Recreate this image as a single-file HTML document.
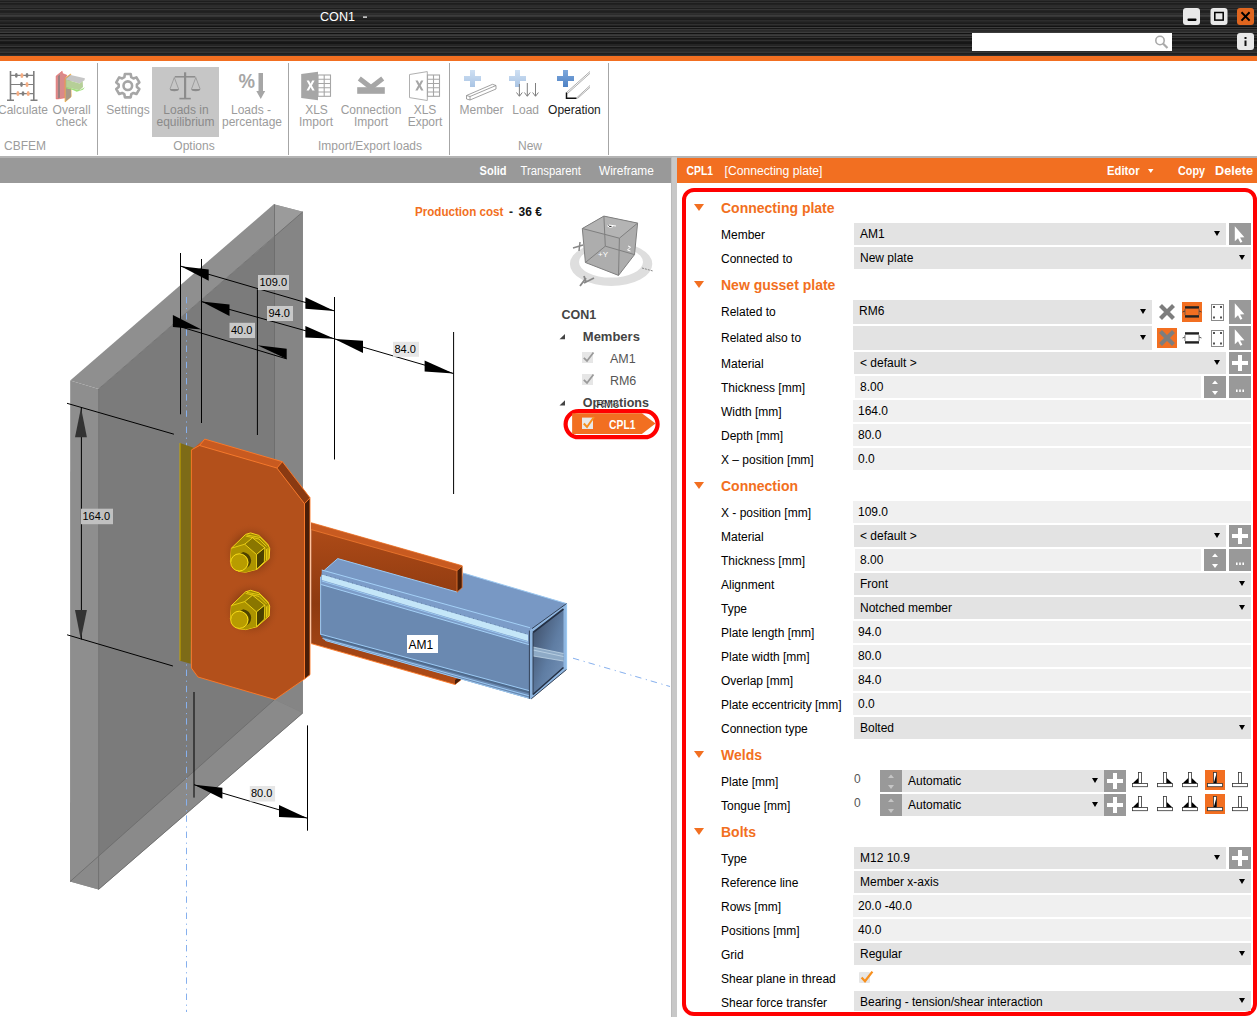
<!DOCTYPE html>
<html><head><meta charset="utf-8">
<style>
*{box-sizing:border-box;margin:0;padding:0}
html,body{width:1257px;height:1017px;overflow:hidden;background:#fff;font-family:"Liberation Sans",sans-serif;position:relative}
.a{position:absolute}
#title{left:0;top:0;width:1257px;height:56px;background:linear-gradient(180deg,rgb(44,44,44) 0px,rgb(44,44,44) 1px,rgb(30,30,30) 1px,rgb(30,30,30) 2px,rgb(48,48,48) 2px,rgb(48,48,48) 3px,rgb(30,30,30) 3px,rgb(30,30,30) 4px,rgb(34,34,34) 4px,rgb(34,34,34) 5px,rgb(44,44,44) 5px,rgb(44,44,44) 6px,rgb(44,44,44) 6px,rgb(44,44,44) 7px,rgb(48,48,48) 7px,rgb(48,48,48) 8px,rgb(30,30,30) 8px,rgb(30,30,30) 9px,rgb(54,54,54) 9px,rgb(54,54,54) 10px,rgb(36,36,36) 10px,rgb(36,36,36) 11px,rgb(32,32,32) 11px,rgb(32,32,32) 12px,rgb(34,34,34) 12px,rgb(34,34,34) 13px,rgb(48,48,48) 13px,rgb(48,48,48) 14px,rgb(44,44,44) 14px,rgb(44,44,44) 15px,rgb(60,60,60) 15px,rgb(60,60,60) 16px,rgb(54,54,54) 16px,rgb(54,54,54) 17px,rgb(34,34,34) 17px,rgb(34,34,34) 18px,rgb(32,32,32) 18px,rgb(32,32,32) 19px,rgb(28,28,28) 19px,rgb(28,28,28) 20px,rgb(44,44,44) 20px,rgb(44,44,44) 21px,rgb(38,38,38) 21px,rgb(38,38,38) 22px,rgb(32,32,32) 22px,rgb(32,32,32) 23px,rgb(28,28,28) 23px,rgb(28,28,28) 24px,rgb(48,48,48) 24px,rgb(48,48,48) 25px,rgb(34,34,34) 25px,rgb(34,34,34) 26px,rgb(18,18,18) 26px,rgb(18,18,18) 27px,rgb(60,60,60) 27px,rgb(60,60,60) 28px,rgb(22,22,22) 28px,rgb(22,22,22) 29px,rgb(54,54,54) 29px,rgb(54,54,54) 30px,rgb(42,42,42) 30px,rgb(42,42,42) 31px,rgb(44,44,44) 31px,rgb(44,44,44) 32px,rgb(60,60,60) 32px,rgb(60,60,60) 33px,rgb(18,18,18) 33px,rgb(18,18,18) 34px,rgb(54,54,54) 34px,rgb(54,54,54) 35px,rgb(60,60,60) 35px,rgb(60,60,60) 36px,rgb(32,32,32) 36px,rgb(32,32,32) 37px,rgb(54,54,54) 37px,rgb(54,54,54) 38px,rgb(22,22,22) 38px,rgb(22,22,22) 39px,rgb(30,30,30) 39px,rgb(30,30,30) 40px,rgb(48,48,48) 40px,rgb(48,48,48) 41px,rgb(28,28,28) 41px,rgb(28,28,28) 42px,rgb(22,22,22) 42px,rgb(22,22,22) 43px,rgb(22,22,22) 43px,rgb(22,22,22) 44px,rgb(36,36,36) 44px,rgb(36,36,36) 45px,rgb(36,36,36) 45px,rgb(36,36,36) 46px,rgb(54,54,54) 46px,rgb(54,54,54) 47px,rgb(22,22,22) 47px,rgb(22,22,22) 48px,rgb(34,34,34) 48px,rgb(34,34,34) 49px,rgb(44,44,44) 49px,rgb(44,44,44) 50px,rgb(40,40,40) 50px,rgb(40,40,40) 51px,rgb(44,44,44) 51px,rgb(44,44,44) 52px,rgb(54,54,54) 52px,rgb(54,54,54) 53px,rgb(30,30,30) 53px,rgb(30,30,30) 54px,rgb(36,36,36) 54px,rgb(36,36,36) 55px,rgb(48,48,48) 55px,rgb(48,48,48) 56px)}
#obar{left:0;top:56px;width:1257px;height:5px;background:#f26f21}
#ribbon{left:0;top:61px;width:1257px;height:96px;background:#fff}
.wbtn{width:17px;height:17px;border-radius:3px;background:#e8e8e8}
#vtb{left:0;top:157px;width:671px;height:26px;background:#999;border-top:1px solid #b4b4b4}
#split{left:671px;top:157px;width:6px;height:860px;background:#c8c8c8;border-left:1px solid #bbb}
#rhead{left:677px;top:157px;width:580px;height:26px;background:#f26f21;border-top:1px solid #b4b4b4}
#rpanel{left:682px;top:188px;width:575px;height:828px;border:4px solid #ff0000;border-radius:12px}
.lbl{position:absolute;left:721px;font-size:12px;color:#000}
.hdr{position:absolute;left:721px;font-size:14px;font-weight:bold;color:#f26f21}
.tri{position:absolute;left:694px;width:0;height:0;border-left:5px solid transparent;border-right:5px solid transparent;border-top:7px solid #f26f21}
.fld{position:absolute;height:22px;font-size:12px;color:#000;padding-left:6px;line-height:22px;white-space:nowrap;overflow:hidden}
.dd{background:#e3e3e3}
.tx{background:#f0f0f0}
.arr{position:absolute;width:0;height:0;border-left:3.5px solid transparent;border-right:3.5px solid transparent;border-top:5px solid #000}
.gbtn{position:absolute;background:#999;width:22px;height:22px}
</style></head><body>
<div id="title" class="a"></div>
<svg class="a" style="left:300px;top:0" width="100" height="40" viewBox="300 0 100 40" font-family="Liberation Sans"><text x="320" y="21" font-size="13.5" fill="#fff" textLength="35" lengthAdjust="spacingAndGlyphs">CON1</text><rect x="363" y="16.5" width="4" height="1.2" fill="#fff"/></svg>
<svg class="a" style="left:960px;top:0" width="297" height="56" viewBox="960 0 297 56">
<rect x="1183" y="8" width="17" height="17" rx="3" fill="#e8e8e8"/>
<rect x="1187.5" y="18.5" width="9" height="2.4" rx="0.8" fill="#000"/>
<rect x="1210.5" y="8" width="17" height="17" rx="3" fill="#e8e8e8"/>
<rect x="1214.8" y="12.5" width="8.4" height="7.6" fill="none" stroke="#000" stroke-width="1.5"/>
<rect x="1237" y="8" width="17" height="17" rx="3" fill="#e0661f"/>
<path d="M1241.5 12.3 L1249.6 20.6 M1249.6 12.3 L1241.5 20.6" stroke="#000" stroke-width="2"/>
<rect x="972" y="33" width="200" height="18" fill="#fff"/>
<circle cx="1160" cy="40.5" r="4.2" fill="none" stroke="#aaa" stroke-width="1.6"/>
<path d="M1163 43.5 L1167.5 48" stroke="#aaa" stroke-width="2.2"/>
<rect x="1237" y="33" width="17" height="17" rx="3" fill="#e8e8e8"/>
<rect x="1244.5" y="37" width="2" height="2" fill="#111"/>
<rect x="1244.5" y="40.5" width="2" height="5.5" fill="#111"/>
</svg>
<div id="obar" class="a"></div>
<div id="ribbon" class="a"></div>
<svg class="a" style="left:0;top:61px" width="1257" height="96" viewBox="0 61 1257 96" font-family="Liberation Sans" font-size="12">
<rect x="152" y="67" width="67" height="70" fill="#c6c6c6"/>
<g stroke="#a6a6a6" stroke-width="1"><path d="M97.5 63 V155 M288.5 63 V155 M449.5 63 V155 M608.5 63 V155"/></g>
<rect x="0" y="156" width="1257" height="1" fill="#b4b4b4"/>
<!-- abacus -->
<g stroke="#7f7f7f" stroke-width="1.6" fill="none">
<path d="M10.5 71 V100 M33.8 71 V100 M7 100.2 H14 M30.5 100.2 H37.5"/>
<path d="M10.5 75.4 H33.8 M10.5 84.5 H33.8 M10.5 93.6 H33.8" stroke-width="1.1"/>
</g>
<g fill="#7f7f7f"><ellipse cx="16.3" cy="75.4" rx="1.4" ry="2.4"/><ellipse cx="27" cy="75.4" rx="1.4" ry="2.4"/><ellipse cx="21.5" cy="84.5" rx="1.4" ry="2.4"/><ellipse cx="23" cy="93.6" rx="1.4" ry="2.4"/></g>
<g fill="#f6ad82"><ellipse cx="21.9" cy="75.4" rx="1.5" ry="2.5"/><ellipse cx="27" cy="84.5" rx="1.5" ry="2.5"/><ellipse cx="17.9" cy="93.6" rx="1.5" ry="2.5"/><ellipse cx="28.2" cy="93.6" rx="1.5" ry="2.5"/></g>
<!-- overall check -->
<polygon points="56.1,76.1 62.1,71.2 62.6,73.6 67,75.3 65.1,78.3 65.1,97.8 58,98.9 56.1,98.9" fill="#d98a8a" stroke="#e86a6a" stroke-width="0.6"/>
<polygon points="58,76 60,74.6 60,97.8 58,98.5" fill="#9c8080"/>
<polygon points="65.1,78.3 70.7,74 71.1,96.7 65.1,101.9" fill="#a89888" stroke="#f5b040" stroke-width="0.8"/>
<polygon points="65.8,79.1 70.7,75 84.9,78.3 84.5,80.2 79.7,83.6 66.2,79.8" fill="#c6c6c6"/>
<polygon points="66.2,79.8 79.7,83.6 82.7,81.3 83,86.9 79.7,90.3 66.2,87.3" fill="#b6cf98"/>
<polygon points="66.2,87.3 79.7,90.3 84.9,87.3 83,89.8 76.7,91.8 72.9,89.9 66.2,88.6" fill="#9ee07a"/>
<polygon points="66.2,88.6 71,89.5 71.1,96.7 66.2,100.8" fill="#a89888"/>
<!-- gear -->
<path d="M124.35 77.17 L124.90 74.06 L130.70 74.06 L131.25 77.17 L133.46 78.45 L136.43 77.36 L139.34 82.39 L136.91 84.42 L136.91 86.98 L139.34 89.01 L136.43 94.04 L133.46 92.95 L131.25 94.23 L130.70 97.34 L124.90 97.34 L124.35 94.23 L122.14 92.95 L119.17 94.04 L116.26 89.01 L118.69 86.98 L118.69 84.42 L116.26 82.39 L119.17 77.36 L122.14 78.45Z" fill="none" stroke="#a6a6a6" stroke-width="2.6" stroke-linejoin="round"/>
<circle cx="127.8" cy="85.7" r="4.3" fill="none" stroke="#a6a6a6" stroke-width="2.6"/>
<!-- scale -->
<g fill="#8c8c8c" stroke="#8c8c8c">
<path d="M185.1 72.3 V98.5" stroke-width="2.2"/>
<path d="M179.4 98.6 H190.8" stroke-width="1.6"/>
<path d="M174.8 76.8 H195.3" stroke-width="1.5"/>
<path d="M174.3 77.5 L170 89 M174.3 77.5 L178.6 89 M195.8 77.5 L191.5 89 M195.8 77.5 L200.1 89" stroke-width="0.7" fill="none"/>
<path d="M169.8 89 H178.9 A4.55 2.2 0 0 1 169.8 89Z" stroke="none"/>
<path d="M191.2 89 H200.3 A4.55 2.2 0 0 1 191.2 89Z" stroke="none"/>
</g>
<!-- % down -->
<text x="238.5" y="88.2" font-size="19.5" font-weight="bold" fill="#a6a6a6" textLength="16.5" lengthAdjust="spacingAndGlyphs">%</text>
<path d="M258.5 73 H263 V91 H265.2 L260.75 99 L256.3 91 H258.5Z" fill="#a6a6a6"/>
<!-- XLS import -->
<path d="M301.2 74 L318 71.8 V100.3 L301.2 98Z" fill="#a6a6a6"/>
<path d="M306.6 80.6 h2.4 l1.6 3.2 l1.6 -3.2 h2.4 l-2.7 5 l2.8 5 h-2.4 l-1.7 -3.3 l-1.7 3.3 h-2.4 l2.8 -5 z" fill="#fff"/>
<g stroke="#a6a6a6" fill="none" stroke-width="1.1"><rect x="318" y="75" width="12.5" height="21.3"/><path d="M318 79.2 H330.5 M318 83.5 H330.5 M318 87.8 H330.5 M318 92 H330.5 M324.2 75 V96.3"/></g>
<!-- connection import -->
<path d="M359.3 78.6 L371 87.5 L382.7 78.6" stroke="#a6a6a6" stroke-width="5" fill="none"/><rect x="357.2" y="87.2" width="27.6" height="6.6" fill="#a6a6a6"/>
<!-- XLS export -->
<path d="M409.5 74.5 L427.3 71.6 V100.5 L409.5 97.6Z" fill="#fff" stroke="#b0b0b0" stroke-width="1"/>
<path d="M415.4 80.6 h2.4 l1.6 3.2 l1.6 -3.2 h2.4 l-2.7 5 l2.8 5 h-2.4 l-1.7 -3.3 l-1.7 3.3 h-2.4 l2.8 -5 z" fill="#a6a6a6"/>
<g stroke="#a6a6a6" fill="none" stroke-width="1.1"><rect x="427.5" y="75" width="12" height="21.3"/><path d="M427.5 79.2 H439.5 M427.5 83.5 H439.5 M427.5 87.8 H439.5 M427.5 92 H439.5 M433.5 75 V96.3"/></g>
<!-- member -->
<defs><linearGradient id="pl" x1="0" y1="0" x2="0" y2="1"><stop offset="0" stop-color="#cfe0f3"/><stop offset="1" stop-color="#a9c4e4"/></linearGradient>
<linearGradient id="pl2" x1="0" y1="0" x2="0" y2="1"><stop offset="0" stop-color="#7ea8dc"/><stop offset="1" stop-color="#4f82c4"/></linearGradient></defs>
<path d="M470 70 h5 v6 h6 v5 h-6 v6 h-5 v-6 h-6 v-5 h6z" fill="url(#pl)"/>
<g stroke="#8a8a8a" fill="#fff" stroke-width="0.8"><path d="M466.5 95.5 L492.5 84.3 L496 85.5 L496 89 L470 100 L466.5 99 Z"/><path d="M466.5 95.5 L470 96.5 L496 85.5 M470 96.5 V100" fill="none"/></g>
<!-- load -->
<path d="M515 70 h5 v6 h6 v5 h-6 v6 h-5 v-6 h-6 v-5 h6z" fill="url(#pl)"/>
<g stroke="#7f7f7f" stroke-width="1" fill="none"><path d="M519.4 84 V96 M516.5 92.5 L519.4 96.3 L522.3 92.5 M527.3 83 V96 M524.4 92.5 L527.3 96.3 L530.2 92.5 M535.5 83 V96 M532.6 92.5 L535.5 96.3 L538.4 92.5"/></g>
<!-- operation -->
<path d="M563 70 h5 v6 h6 v5 h-6 v6 h-5 v-6 h-6 v-5 h6z" fill="url(#pl2)"/>
<g stroke="#8a8a8a" stroke-width="0.7" fill="none"><path d="M566.5 92.5 L590 71.5 M567.5 93.5 L590 73.3 M576.5 98 L590 85.5 M577.5 98.5 L590 87.3"/></g>
<path d="M566.5 92.5 V98.3 H576.5" stroke="#111" stroke-width="1.5" fill="none"/>
<!-- labels -->
<g fill="#9c9c9c" text-anchor="middle">
<text x="23" y="114">Calculate</text>
<text x="71.6" y="114">Overall</text><text x="71.5" y="126">check</text>
<text x="25" y="150">CBFEM</text>
<text x="128" y="114">Settings</text>
<text x="186" y="114" fill="#8a8a8a">Loads in</text><text x="185.5" y="126" fill="#8a8a8a">equilibrium</text>
<text x="251" y="114">Loads -</text><text x="252" y="126">percentage</text>
<text x="194" y="150">Options</text>
<text x="316.5" y="114">XLS</text><text x="316" y="126">Import</text>
<text x="371" y="114">Connection</text><text x="371" y="126">Import</text>
<text x="425" y="114">XLS</text><text x="425" y="126">Export</text>
<text x="370" y="150">Import/Export loads</text>
<text x="481.5" y="114">Member</text>
<text x="525.7" y="114">Load</text>
<text x="574.4" y="114" fill="#1a1a1a">Operation</text>
<text x="530" y="150">New</text>
</g>
</svg>

<div id="vtb" class="a"></div>
<svg class="a" style="left:0;top:157px" width="671" height="860" viewBox="0 157 671 860" font-family="Liberation Sans">
<defs>
<linearGradient id="tubeInner" x1="0" y1="0" x2="1" y2="1"><stop offset="0" stop-color="#3a4860"/><stop offset="0.55" stop-color="#5f7da3"/><stop offset="1" stop-color="#7896bc"/></linearGradient>
<radialGradient id="bshadow" cx="0.5" cy="0.5" r="0.5"><stop offset="0.45" stop-color="#6e300c" stop-opacity="0.75"/><stop offset="1" stop-color="#b5501c" stop-opacity="0"/></radialGradient>
<linearGradient id="tongueG" x1="0" y1="0" x2="0" y2="1"><stop offset="0" stop-color="#b04c18"/><stop offset="0.5" stop-color="#8e3a10"/><stop offset="1" stop-color="#b04c18"/></linearGradient>
</defs>
<!-- viewport toolbar text -->
<g font-size="12" fill="#fff">
<text x="479.6" y="175" font-weight="bold" textLength="27" lengthAdjust="spacingAndGlyphs">Solid</text>
<text x="520.5" y="175" textLength="60.5" lengthAdjust="spacingAndGlyphs">Transparent</text>
<text x="599" y="175" textLength="54.8" lengthAdjust="spacingAndGlyphs">Wireframe</text>
</g>
<!-- column plate -->
<polygon points="70.2,380.6 98.6,389 98.6,889.4 70,881.6" fill="#8e8e8e"/>
<polygon points="98.6,389 302.8,211.8 302.8,713 98.6,889.4" fill="#7b7b7b"/>
<polygon points="274.5,235.7 302.8,211.8 302.8,713 274.5,699.6" fill="#858585"/>
<polygon points="70,881.6 274.5,699.6 302.8,713 98.6,889.4" fill="#8a8a8a"/>
<polygon points="70.2,380.6 273.8,204.3 302.8,211.8 98.6,389" fill="#8f8f8f"/>
<polygon points="273.8,204.3 302.8,211.8 274.6,235.7" fill="#9b9b9b"/>
<g stroke="#6a6a6a" stroke-width="0.8" fill="none">
<path d="M274.5 204.3 V699.6 M70 881.6 L274.5 699.6 M98.6 389 L302.8 211.8 M98.6 389 V889.4 M98.6 889.4 L302.8 713"/>
</g>
<!-- dash-dot axis vertical -->
<path d="M186.5 297 V1012" stroke="#86b0ee" stroke-width="1" stroke-dasharray="6.4,4.6,1.2,4" fill="none"/>
<!-- weld strip -->
<polygon points="180,443 193.6,447.7 190.6,663.7 180,660.7" fill="#7d6b17"/>
<path d="M180 443 V660.7" stroke="#c9a800" stroke-width="1"/>
<!-- tongue plate -->
<polygon points="311.2,522.7 462.2,565.7 460.7,680 455,684.5 311.2,643.6" fill="url(#tongueG)"/>
<polygon points="311.2,522.7 462.2,565.7 457,570.7 311.2,529.6" fill="#c85a20"/>
<path d="M311.2 522.7 L462.2 565.7 M311.2 529.6 L457 570.7" stroke="#f07a30" stroke-width="0.8" fill="none"/>
<path d="M311.2 643.6 L455 684.5 L460.7 680" stroke="#ff7a28" stroke-width="0.9" fill="none"/><polygon points="455,684.5 460.7,680 460.7,676 455,680" fill="#4a1e08"/>
<!-- orange gusset plate: top face & side faces -->
<polygon points="191.4,449.9 204.7,439.1 282.4,461.7 310,497.8 310,674.7 304.5,679 304.5,503.7 276.9,468 199.5,445.5" fill="#c85a20"/>
<polygon points="276.9,468 282.4,461.7 310,497.8 304.5,503.7" fill="#8a3a12"/>
<polygon points="304.5,503.7 310,497.8 310,674.7 304.5,679" fill="#4a1e08"/>
<polygon points="191.4,449.9 199.5,445.5 276.9,468 304.5,503.7 304.5,679 275,699.5 198,677 191.4,668" fill="#b3501b"/>
<path d="M191.4 449.9 L199.5 445.5 L276.9 468 L304.5 503.7 L304.5 679 L275 699.5 L198 677 L191.4 668 Z M204.7 439.1 L282.4 461.7 L310 497.8 V674.7 L304.5 679 M199.5 445.5 L204.7 439.1 M276.9 468 L282.4 461.7 M304.5 503.7 L310 497.8" stroke="#ff7a28" stroke-width="0.9" fill="none"/>
<!-- bolts -->
<g id="bolt1">
<ellipse cx="251" cy="552" rx="29" ry="29" fill="url(#bshadow)"/>
<polygon points="231.4,548.2 245.6,534.4 250.6,532.9 258.9,535.4 267.8,544.2 269.7,548.6 269.2,558.5 257,569.3 245.6,572.2 238.3,571.3 230.4,561.4" fill="#a08800" stroke="#ffe21a" stroke-width="0.9"/>
<polygon points="231.4,548.2 244.7,544.2 256.5,554.5 256.5,569.3 245.6,572.2 238.3,571.3 230.4,561.4" fill="#ac9300"/>
<polygon points="244.7,544.2 252.5,537.8 264.8,547.7 256.5,554.5" fill="#8a7600" stroke="#ffe21a" stroke-width="0.8"/>
<polygon points="256.5,554.5 264.8,547.7 264.3,561.9 256.5,569.3" fill="#4a4000" stroke="#ffe21a" stroke-width="0.8"/>
<path d="M231.4 548.2 L244.7 544.2 M245.6 536 L259 539 L266.5 546.5 M247 535 L260.5 537.5 L268 545.5 M266.5 549 V560 M268 548 V559" stroke="#ffe21a" stroke-width="0.7" fill="none"/>
<path d="M240 553.8 a8.6 8.6 0 0 1 8.6 8.6 a8.6 8.6 0 0 1 -2 5.5 L249.2 566 a9 9 0 0 0 2 -5.6 a9 9 0 0 0 -8 -8.5 Z" fill="#4e4200"/>
<circle cx="239.3" cy="562.4" r="8.6" fill="#b89c00" stroke="#ffe21a" stroke-width="0.9"/>
</g>
<use href="#bolt1" transform="translate(0 57.4)"/>
<!-- tube -->
<polygon points="337.7,558.6 457,592 463.3,573.1 566.5,603.6 566.5,669.5 531.3,698.8 325.3,640.5 320.6,634.6 320.6,576.8 324.2,570.4" fill="#7898c4"/>
<polygon points="321.8,569.8 530,627.5 529.4,644.8 321.2,584.5" fill="#7c9cc8"/>
<path d="M321.8 570 L530 627.7" stroke="#a4d0f6" stroke-width="1" fill="none"/>
<polygon points="321.8,574.5 528,634.8 528,641 321.8,580" fill="#c4e6f8"/>
<path d="M321.8 574 L528 634.3" stroke="#5a7898" stroke-width="0.8" stroke-dasharray="1,3.5" fill="none"/>
<path d="M321.8 581 L528 642" stroke="#9cc8f0" stroke-width="1" fill="none"/>
<polygon points="321.2,584.5 529.4,644.8 529.4,698.8 325.3,640.5 320.6,634.6" fill="#6a89b1"/>
<path d="M321.2 584.5 L529.4 644.8" stroke="#a4d0f6" stroke-width="1" fill="none"/>
<polygon points="320.6,634.2 529.4,690.7 529.4,693.5 321.5,637" fill="#4f6a8c"/>
<path d="M320.6 634.2 L529.4 690.7 M322.5 638.5 L530 696" stroke="#9ccaf4" stroke-width="1" fill="none"/>
<path d="M337.7 558.6 L457 592 M463.3 573.1 L566.5 603.6 M320.6 576.8 V634.6 M324.2 570.4 L337.7 558.6 M325.3 640.5 L531.3 698.8" stroke="#9cc8f0" stroke-width="1" fill="none"/>
<!-- tube end -->
<polygon points="532,628.6 566.5,603.6 566.5,669.5 531.3,698.8 529.4,698.8 529.4,630.5" fill="#8fb6e0"/>
<polygon points="533,632.5 563.5,609 563.5,667.5 533,694.5" fill="url(#tubeInner)"/>
<polygon points="533,647 563.5,653.5 563.5,661 533,656" fill="#8eaac6"/>
<path d="M533 647 L563.5 653.5 M533 650 L563.5 656.5 M533 656 L563.5 661" stroke="#c8dcec" stroke-width="0.7" fill="none"/>
<path d="M533 694.5 L563.5 667.5 M533 632.5 L563.5 609" stroke="#243044" stroke-width="1.6" fill="none"/>
<path d="M532 628.6 L566.5 603.6 V669.5 L531.3 698.8 M529.4 630.5 V698.8 M533 632.5 V694.5" stroke="#2a3548" stroke-width="0.9" fill="none"/>
<path d="M566.5 603.6 V669.5" stroke="#9cc8f0" stroke-width="1.2" fill="none"/>
<!-- tongue end above tube -->
<polygon points="457,570.7 462.2,566 462.2,587.6 457,592.2" fill="#4a1e08" stroke="#f07a30" stroke-width="0.8"/>
<!-- axis dash-dot -->
<path d="M573 658.2 L670 686.5" stroke="#86b0ee" stroke-width="1" stroke-dasharray="6.4,4.6,1.2,4" fill="none"/>
<!-- AM1 label -->
<rect x="407" y="635" width="31" height="18" fill="#fff"/>
<text x="408.5" y="648.5" font-size="12" fill="#000">AM1</text>
<!-- dimensions -->
<g stroke="#000" stroke-width="1" fill="none">
<path d="M180.5 253 V414.3 M201.5 259 V423 M257.4 289.4 V435 M334.5 297 V459.5 M453.6 332 V494"/>
<path d="M180.8 266.2 L334.4 310.9 M201.5 301.6 L334.4 338.8 L453.6 373.5 M172.9 324.5 L286.7 358.9"/>
<path d="M67 403.3 L173.9 434.2 M67.1 634.8 L172.9 666 M81.4 407.7 V639.5"/>
<path d="M194 692 V797.6 M307.5 725.4 V830.7 M194 784.7 L307.5 818.2"/>
</g>
<g fill="#000">
<polygon points="180.8,266.2 208.7,269.4 208.7,280.8"/>
<polygon points="334.4,310.9 305.4,297.3 305.4,308.7"/>
<polygon points="201.5,301.6 229.5,304.5 229.5,316"/>
<polygon points="334.4,338.8 305.4,326 305.4,337.4"/>
<polygon points="172.9,315 172.9,327 201.5,329.5"/>
<polygon points="257.4,345.3 286.7,348.8 286.7,358.9"/>
<polygon points="334.6,339 363,340.8 363,353"/>
<polygon points="453.6,373.5 424.6,360.4 424.6,371.6"/>
<polygon points="194,784.7 222.4,787.8 222.4,798.7"/>
<polygon points="307.5,818.2 279,805 279,817"/>
</g>
<g fill="#333">
<polygon points="81,407.7 75,437.2 86.9,437.2"/>
<polygon points="80.8,639.5 75,610 86.9,610"/>
</g>
<g font-size="11" fill="#000">
<rect x="258" y="275" width="31" height="15" fill="#c8c8c8"/><text x="259.5" y="286">109.0</text>
<rect x="267" y="306" width="26" height="15" fill="#c8c8c8"/><text x="268.5" y="317">94.0</text>
<rect x="229.5" y="322.8" width="25.5" height="15.2" fill="#c8c8c8"/><text x="231" y="334">40.0</text>
<rect x="393" y="341.8" width="26" height="15" fill="#e6e6e6"/><text x="394.5" y="353">84.0</text>
<rect x="81" y="508.7" width="32" height="15.5" fill="#c0c0c0"/><text x="82.5" y="520">164.0</text>
<rect x="249.8" y="786" width="25.3" height="15.5" fill="#e6e6e6"/><text x="251" y="797">80.0</text>
</g>
<!-- production cost -->
<text x="415" y="216.4" font-size="12" font-weight="bold" fill="#f26f21" textLength="88.4" lengthAdjust="spacingAndGlyphs">Production cost</text>
<text x="509" y="216.4" font-size="12" font-weight="bold" fill="#222">-</text>
<text x="518.5" y="216.4" font-size="12" font-weight="bold" fill="#111">36 €</text>
<!-- view cube -->
<path fill-rule="evenodd" d="M569.9 264 a41.2 22 0 1 0 82.4 0 a41.2 22 0 1 0 -82.4 0 Z M579 262 a32 15.6 0 1 0 64 0 a32 15.6 0 1 0 -64 0 Z" fill="#dedede"/>
<polygon points="582.3,228.5 603.9,216.1 637.6,223.1 634.5,254.6 618.5,275.4 585.4,262.5" fill="#adadad"/>
<polygon points="582.3,228.5 603.9,216.1 637.6,223.1 619.4,238.2" fill="#b4b4b4"/>
<g stroke="#7f7f7f" stroke-width="1" fill="none">
<path d="M582.3 228.5 L603.9 216.1 L637.6 223.1 L619.4 238.2 Z M585.4 262.5 L605.3 246.2 L634.5 254.6 L618.5 275.4 Z M582.3 228.5 L585.4 262.5 M603.9 216.1 L605.3 246.2 M637.6 223.1 L634.5 254.6 M619.4 238.2 L618.5 275.4"/>
</g>
<g fill="#fff" font-size="8"><text x="598" y="256.5">+Y</text></g><path d="M607 225.5 L610 227.5 L613 226.5 M609 225 L616 226" stroke="#fff" stroke-width="1"/><path d="M628 246 L630.5 247 L627.5 250 L630.5 251" stroke="#fff" stroke-width="1" fill="none"/>
<path d="M573 248 L583 245 M580 242 L579 251" stroke="#888" stroke-width="1.5"/>
<path d="M642 268 L653 271" stroke="#888" stroke-width="1" stroke-dasharray="2,1"/>
<path d="M580 286 L586 278 M584 283 L594 278 M584 276 L586 282" stroke="#888" stroke-width="1.8"/>
<!-- tree -->
<text x="561.4" y="318.8" font-size="12.5" font-weight="bold" fill="#444">CON1</text>
<polygon points="559.5,339.2 565,339.2 565,334" fill="#444"/>
<text x="582.8" y="340.6" font-size="13" font-weight="bold" fill="#444">Members</text>
<rect x="582" y="352" width="11" height="11" fill="#e6e6e6"/><path d="M583.8 357.8 L587 361 L593.5 352.5" stroke="#9a9a9a" stroke-width="1.8" fill="none"/>
<text x="609.9" y="362.7" font-size="12.5" fill="#555">AM1</text>
<rect x="582" y="374" width="11" height="11" fill="#e6e6e6"/><path d="M583.8 379.8 L587 383 L593.5 374.5" stroke="#9a9a9a" stroke-width="1.8" fill="none"/>
<text x="609.9" y="384.8" font-size="12.5" fill="#555">RM6</text>
<polygon points="559.5,405.4 565,405.4 565,400.2" fill="#444"/>
<text x="582.8" y="406.9" font-size="13" font-weight="bold" fill="#444" textLength="66.2" lengthAdjust="spacingAndGlyphs">Operations</text>
<text x="596.3" y="408.3" font-size="11" fill="#1a1a1a" stroke="#fff" stroke-width="0.6" paint-order="stroke" textLength="22.8" lengthAdjust="spacingAndGlyphs">RM6</text>
<rect x="565.6" y="411.2" width="92" height="26" rx="13" ry="13" fill="none" stroke="#ff0000" stroke-width="4.2"/>
<polygon points="572.1,413.3 641.9,413.3 655.5,423.6 641.9,434 572.1,434" fill="#f26f21"/>
<rect x="582" y="417.6" width="11" height="11.4" fill="#e8e8e8"/><path d="M583.8 423.5 L587 427 L594 417" stroke="#f7901e" stroke-width="2" fill="none"/>
<text x="609.1" y="429" font-size="12.5" font-weight="bold" fill="#fff" textLength="26.4" lengthAdjust="spacingAndGlyphs">CPL1</text>
</svg>

<div id="split" class="a"></div>
<div id="rhead" class="a"></div>
<svg class="a" style="left:677px;top:157px" width="580" height="26" viewBox="677 157 580 26" font-family="Liberation Sans" font-size="12" fill="#fff">
<text x="686.5" y="175" font-weight="bold" textLength="26.5" lengthAdjust="spacingAndGlyphs">CPL1</text>
<text x="724.5" y="175" textLength="98" lengthAdjust="spacingAndGlyphs">[Connecting plate]</text>
<text x="1107" y="175" font-weight="bold" textLength="32.6" lengthAdjust="spacingAndGlyphs">Editor</text>
<path d="M1148 169 H1153.5 L1150.75 173 Z"/>
<text x="1178" y="175" font-weight="bold" textLength="27" lengthAdjust="spacingAndGlyphs">Copy</text>
<text x="1215" y="175" font-weight="bold" textLength="38" lengthAdjust="spacingAndGlyphs">Delete</text>
</svg>
<div id="rpanel" class="a"></div>
<div class="tri" style="top:204px"></div>
<div class="hdr" style="top:201px;line-height:14px">Connecting plate</div>
<div class="lbl" style="top:224px;line-height:22px">Member</div>
<div class="fld dd" style="top:223px;left:854px;width:372px;height:22px;line-height:22px">AM1</div>
<div class="arr" style="left:1213.5px;top:231px"></div>
<div class="gbtn" style="top:223px;left:1229px;height:22px">
<svg width="22" height="24" viewBox="0 0 22 24"><path d="M5.8 3.2 L5.8 18.3 L9 15.3 L11.4 19.8 L13.4 18.8 L11.1 14.4 L15.4 14.2 Z" fill="#fff"/></svg>
</div>
<div class="lbl" style="top:248px;line-height:22px">Connected to</div>
<div class="fld dd" style="top:247px;left:854px;width:397px;height:22px;line-height:22px">New plate</div>
<div class="arr" style="left:1238.5px;top:255px"></div>
<div class="tri" style="top:281px"></div>
<div class="hdr" style="top:278px;line-height:14px">New gusset plate</div>
<div class="lbl" style="top:300px;line-height:24px">Related to</div>
<div class="fld dd" style="top:300px;left:853px;width:299px;height:24px;line-height:22px">RM6</div>
<div class="arr" style="left:1139.5px;top:309px"></div>
<div class="a" style="left:1157px;top:302px;width:20px;height:20px;"><svg width="20" height="20" viewBox="0 0 20 20"><path d="M3.5 3.5 L16.5 16.5 M16.5 3.5 L3.5 16.5" stroke="#7d7d7d" stroke-width="4.2"/></svg></div>
<div class="a" style="left:1182px;top:302px;width:20px;height:20px;background:#f26f21"><svg width="20" height="20" viewBox="0 0 20 20"><rect x="3" y="4.2" width="14" height="2.4" fill="#222"/><rect x="3" y="13.2" width="14" height="2.4" fill="#222"/><path d="M3 7 V13 M17 7 V13" stroke="#555" stroke-width="0.8"/><path d="M0.5 10 L3 9 M19.5 10 L17 9" stroke="#333" stroke-width="0.8"/></svg></div>
<div class="a" style="left:1211px;top:304px;width:13px;height:17px"><svg width="13" height="17" viewBox="0 0 13 17"><rect x="0.5" y="0.5" width="12" height="16" fill="#fff" stroke="#8a8a8a" stroke-width="1"/><rect x="2" y="2" width="2" height="2" fill="#555"/><rect x="9" y="2" width="2" height="2" fill="#555"/><rect x="2" y="12.5" width="2" height="2" fill="#555"/><rect x="9" y="12.5" width="2" height="2" fill="#555"/></svg></div>
<div class="gbtn" style="top:300px;left:1229px;height:24px">
<svg width="22" height="24" viewBox="0 0 22 24"><path d="M5.8 3.2 L5.8 18.3 L9 15.3 L11.4 19.8 L13.4 18.8 L11.1 14.4 L15.4 14.2 Z" fill="#fff"/></svg>
</div>
<div class="lbl" style="top:326px;line-height:24px">Related also to</div>
<div class="fld dd" style="top:326px;left:853px;width:299px;height:24px;line-height:22px"></div>
<div class="arr" style="left:1139.5px;top:335px"></div>
<div class="a" style="left:1157px;top:328px;width:20px;height:20px;background:#f26f21"><svg width="20" height="20" viewBox="0 0 20 20"><path d="M3.5 3.5 L16.5 16.5 M16.5 3.5 L3.5 16.5" stroke="#7d7d7d" stroke-width="4.2"/></svg></div>
<div class="a" style="left:1182px;top:328px;width:20px;height:20px;"><svg width="20" height="20" viewBox="0 0 20 20"><rect x="3" y="4.2" width="14" height="2.4" fill="#222"/><rect x="3" y="13.2" width="14" height="2.4" fill="#222"/><path d="M3 7 V13 M17 7 V13" stroke="#555" stroke-width="0.8"/><path d="M0.5 10 L3 9 M19.5 10 L17 9" stroke="#333" stroke-width="0.8"/></svg></div>
<div class="a" style="left:1211px;top:330px;width:13px;height:17px"><svg width="13" height="17" viewBox="0 0 13 17"><rect x="0.5" y="0.5" width="12" height="16" fill="#fff" stroke="#8a8a8a" stroke-width="1"/><rect x="2" y="2" width="2" height="2" fill="#555"/><rect x="9" y="2" width="2" height="2" fill="#555"/><rect x="2" y="12.5" width="2" height="2" fill="#555"/><rect x="9" y="12.5" width="2" height="2" fill="#555"/></svg></div>
<div class="gbtn" style="top:326px;left:1229px;height:24px">
<svg width="22" height="24" viewBox="0 0 22 24"><path d="M5.8 3.2 L5.8 18.3 L9 15.3 L11.4 19.8 L13.4 18.8 L11.1 14.4 L15.4 14.2 Z" fill="#fff"/></svg>
</div>
<div class="lbl" style="top:353px;line-height:22px">Material</div>
<div class="fld dd" style="top:352px;left:854px;width:372px;height:22px;line-height:22px">&lt; default &gt;</div>
<div class="arr" style="left:1213.5px;top:360px"></div>
<div class="gbtn" style="top:352px;left:1229px;height:22px">
<svg width="22" height="22" viewBox="0 0 22 22"><path d="M9 3h4v6h6v4h-6v6h-4v-6h-6v-4h6z" fill="#fff"/></svg>
</div>
<div class="lbl" style="top:377px;line-height:22px">Thickness [mm]</div>
<div class="fld tx" style="top:376px;left:855px;width:346px;height:22px;line-height:22px;padding-left:5px">8.00</div>
<div class="gbtn" style="top:376px;left:1204px;height:22px">
<svg width="22" height="22" viewBox="0 0 22 22"><path d="M8 8 L14 8 L11 4.5Z" fill="#fff"/><path d="M8 15 L14 15 L11 19Z" fill="#fff"/></svg>
</div>
<div class="gbtn" style="top:376px;left:1229px;height:22px">
<svg width="22" height="22" viewBox="0 0 22 22"><rect x="7" y="13.5" width="1.6" height="2.5" fill="#fff"/><rect x="10.2" y="13.5" width="1.6" height="2.5" fill="#fff"/><rect x="13.4" y="13.5" width="1.6" height="2.5" fill="#fff"/></svg>
</div>
<div class="lbl" style="top:401px;line-height:22px">Width [mm]</div>
<div class="fld tx" style="top:400px;left:853px;width:398px;height:22px;line-height:22px;padding-left:5px">164.0</div>
<div class="lbl" style="top:425px;line-height:22px">Depth [mm]</div>
<div class="fld tx" style="top:424px;left:853px;width:398px;height:22px;line-height:22px;padding-left:5px">80.0</div>
<div class="lbl" style="top:449px;line-height:22px">X – position [mm]</div>
<div class="fld tx" style="top:448px;left:853px;width:398px;height:22px;line-height:22px;padding-left:5px">0.0</div>
<div class="tri" style="top:482px"></div>
<div class="hdr" style="top:479px;line-height:14px">Connection</div>
<div class="lbl" style="top:502px;line-height:22px">X - position [mm]</div>
<div class="fld tx" style="top:501px;left:853px;width:398px;height:22px;line-height:22px;padding-left:5px">109.0</div>
<div class="lbl" style="top:526px;line-height:22px">Material</div>
<div class="fld dd" style="top:525px;left:854px;width:372px;height:22px;line-height:22px">&lt; default &gt;</div>
<div class="arr" style="left:1213.5px;top:533px"></div>
<div class="gbtn" style="top:525px;left:1229px;height:22px">
<svg width="22" height="22" viewBox="0 0 22 22"><path d="M9 3h4v6h6v4h-6v6h-4v-6h-6v-4h6z" fill="#fff"/></svg>
</div>
<div class="lbl" style="top:550px;line-height:22px">Thickness [mm]</div>
<div class="fld tx" style="top:549px;left:855px;width:346px;height:22px;line-height:22px;padding-left:5px">8.00</div>
<div class="gbtn" style="top:549px;left:1204px;height:22px">
<svg width="22" height="22" viewBox="0 0 22 22"><path d="M8 8 L14 8 L11 4.5Z" fill="#fff"/><path d="M8 15 L14 15 L11 19Z" fill="#fff"/></svg>
</div>
<div class="gbtn" style="top:549px;left:1229px;height:22px">
<svg width="22" height="22" viewBox="0 0 22 22"><rect x="7" y="13.5" width="1.6" height="2.5" fill="#fff"/><rect x="10.2" y="13.5" width="1.6" height="2.5" fill="#fff"/><rect x="13.4" y="13.5" width="1.6" height="2.5" fill="#fff"/></svg>
</div>
<div class="lbl" style="top:574px;line-height:22px">Alignment</div>
<div class="fld dd" style="top:573px;left:854px;width:397px;height:22px;line-height:22px">Front</div>
<div class="arr" style="left:1238.5px;top:581px"></div>
<div class="lbl" style="top:598px;line-height:22px">Type</div>
<div class="fld dd" style="top:597px;left:854px;width:397px;height:22px;line-height:22px">Notched member</div>
<div class="arr" style="left:1238.5px;top:605px"></div>
<div class="lbl" style="top:622px;line-height:22px">Plate length [mm]</div>
<div class="fld tx" style="top:621px;left:853px;width:398px;height:22px;line-height:22px;padding-left:5px">94.0</div>
<div class="lbl" style="top:646px;line-height:22px">Plate width [mm]</div>
<div class="fld tx" style="top:645px;left:853px;width:398px;height:22px;line-height:22px;padding-left:5px">80.0</div>
<div class="lbl" style="top:670px;line-height:22px">Overlap [mm]</div>
<div class="fld tx" style="top:669px;left:853px;width:398px;height:22px;line-height:22px;padding-left:5px">84.0</div>
<div class="lbl" style="top:694px;line-height:22px">Plate eccentricity [mm]</div>
<div class="fld tx" style="top:693px;left:853px;width:398px;height:22px;line-height:22px;padding-left:5px">0.0</div>
<div class="lbl" style="top:718px;line-height:22px">Connection type</div>
<div class="fld dd" style="top:717px;left:854px;width:397px;height:22px;line-height:22px">Bolted</div>
<div class="arr" style="left:1238.5px;top:725px"></div>
<div class="tri" style="top:751px"></div>
<div class="hdr" style="top:748px;line-height:14px">Welds</div>
<div class="lbl" style="top:771px;line-height:22px">Plate [mm]</div>
<div class="a" style="left:854px;top:768px;line-height:22px;font-size:12px;color:#555">0</div>
<div class="gbtn" style="top:770px;left:880px;height:22px">
<svg width="22" height="22" viewBox="0 0 22 22"><path d="M8 8 L14 8 L11 4.5Z" fill="#c6c6c6"/><path d="M8 15 L14 15 L11 19Z" fill="#c6c6c6"/></svg>
</div>
<div class="fld dd" style="top:770px;left:902px;width:202px;height:22px;line-height:22px">Automatic</div>
<div class="arr" style="left:1091.5px;top:778px"></div>
<div class="gbtn" style="top:770px;left:1104px;height:22px">
<svg width="22" height="22" viewBox="0 0 22 22"><path d="M9 3h4v6h6v4h-6v6h-4v-6h-6v-4h6z" fill="#fff"/></svg>
</div>
<div class="a" style="left:1130px;top:770px;width:20px;height:20px;"><svg width="20" height="20" viewBox="-2 0 20 20"><rect x="6.5" y="2.5" width="3" height="11" fill="#fff" stroke="#333" stroke-width="0.8"/><rect x="0.5" y="13.5" width="15" height="3.2" fill="#fff" stroke="#333" stroke-width="0.8"/><path d="M6.2 8 L6.2 13.2 L0.8 13.2 Z" fill="#000"/></svg></div>
<div class="a" style="left:1155px;top:770px;width:20px;height:20px;"><svg width="20" height="20" viewBox="-2 0 20 20"><rect x="6.5" y="2.5" width="3" height="11" fill="#fff" stroke="#333" stroke-width="0.8"/><rect x="0.5" y="13.5" width="15" height="3.2" fill="#fff" stroke="#333" stroke-width="0.8"/><path d="M9.8 8 L9.8 13.2 L15.2 13.2 Z" fill="#000"/></svg></div>
<div class="a" style="left:1180px;top:770px;width:20px;height:20px;"><svg width="20" height="20" viewBox="-2 0 20 20"><rect x="6.5" y="2.5" width="3" height="11" fill="#fff" stroke="#333" stroke-width="0.8"/><rect x="0.5" y="13.5" width="15" height="3.2" fill="#fff" stroke="#333" stroke-width="0.8"/><path d="M6.2 8 L6.2 13.2 L0.8 13.2 Z" fill="#000"/><path d="M9.8 8 L9.8 13.2 L15.2 13.2 Z" fill="#000"/></svg></div>
<div class="a" style="left:1205px;top:770px;width:20px;height:20px;background:#f26f21;"><svg width="20" height="20" viewBox="-2 0 20 20"><rect x="6.5" y="2.5" width="3" height="11" fill="#fff" stroke="#333" stroke-width="0.8"/><rect x="0.5" y="13.5" width="15" height="3.2" fill="#fff" stroke="#333" stroke-width="0.8"/><path d="M9.4 4 L9.4 13 L6.8 13 Z" fill="#000"/></svg></div>
<div class="a" style="left:1230px;top:770px;width:20px;height:20px;"><svg width="20" height="20" viewBox="-2 0 20 20"><rect x="6.5" y="2.5" width="3" height="11" fill="#fff" stroke="#333" stroke-width="0.8"/><rect x="0.5" y="13.5" width="15" height="3.2" fill="#fff" stroke="#333" stroke-width="0.8"/></svg></div>
<div class="lbl" style="top:795px;line-height:22px">Tongue [mm]</div>
<div class="a" style="left:854px;top:792px;line-height:22px;font-size:12px;color:#555">0</div>
<div class="gbtn" style="top:794px;left:880px;height:22px">
<svg width="22" height="22" viewBox="0 0 22 22"><path d="M8 8 L14 8 L11 4.5Z" fill="#c6c6c6"/><path d="M8 15 L14 15 L11 19Z" fill="#c6c6c6"/></svg>
</div>
<div class="fld dd" style="top:794px;left:902px;width:202px;height:22px;line-height:22px">Automatic</div>
<div class="arr" style="left:1091.5px;top:802px"></div>
<div class="gbtn" style="top:794px;left:1104px;height:22px">
<svg width="22" height="22" viewBox="0 0 22 22"><path d="M9 3h4v6h6v4h-6v6h-4v-6h-6v-4h6z" fill="#fff"/></svg>
</div>
<div class="a" style="left:1130px;top:794px;width:20px;height:20px;"><svg width="20" height="20" viewBox="-2 0 20 20"><rect x="6.5" y="2.5" width="3" height="11" fill="#fff" stroke="#333" stroke-width="0.8"/><rect x="0.5" y="13.5" width="15" height="3.2" fill="#fff" stroke="#333" stroke-width="0.8"/><path d="M6.2 8 L6.2 13.2 L0.8 13.2 Z" fill="#000"/></svg></div>
<div class="a" style="left:1155px;top:794px;width:20px;height:20px;"><svg width="20" height="20" viewBox="-2 0 20 20"><rect x="6.5" y="2.5" width="3" height="11" fill="#fff" stroke="#333" stroke-width="0.8"/><rect x="0.5" y="13.5" width="15" height="3.2" fill="#fff" stroke="#333" stroke-width="0.8"/><path d="M9.8 8 L9.8 13.2 L15.2 13.2 Z" fill="#000"/></svg></div>
<div class="a" style="left:1180px;top:794px;width:20px;height:20px;"><svg width="20" height="20" viewBox="-2 0 20 20"><rect x="6.5" y="2.5" width="3" height="11" fill="#fff" stroke="#333" stroke-width="0.8"/><rect x="0.5" y="13.5" width="15" height="3.2" fill="#fff" stroke="#333" stroke-width="0.8"/><path d="M6.2 8 L6.2 13.2 L0.8 13.2 Z" fill="#000"/><path d="M9.8 8 L9.8 13.2 L15.2 13.2 Z" fill="#000"/></svg></div>
<div class="a" style="left:1205px;top:794px;width:20px;height:20px;background:#f26f21;"><svg width="20" height="20" viewBox="-2 0 20 20"><rect x="6.5" y="2.5" width="3" height="11" fill="#fff" stroke="#333" stroke-width="0.8"/><rect x="0.5" y="13.5" width="15" height="3.2" fill="#fff" stroke="#333" stroke-width="0.8"/><path d="M9.4 4 L9.4 13 L6.8 13 Z" fill="#000"/></svg></div>
<div class="a" style="left:1230px;top:794px;width:20px;height:20px;"><svg width="20" height="20" viewBox="-2 0 20 20"><rect x="6.5" y="2.5" width="3" height="11" fill="#fff" stroke="#333" stroke-width="0.8"/><rect x="0.5" y="13.5" width="15" height="3.2" fill="#fff" stroke="#333" stroke-width="0.8"/></svg></div>
<div class="tri" style="top:828px"></div>
<div class="hdr" style="top:825px;line-height:14px">Bolts</div>
<div class="lbl" style="top:848px;line-height:22px">Type</div>
<div class="fld dd" style="top:847px;left:854px;width:372px;height:22px;line-height:22px">M12 10.9</div>
<div class="arr" style="left:1213.5px;top:855px"></div>
<div class="gbtn" style="top:847px;left:1229px;height:22px">
<svg width="22" height="22" viewBox="0 0 22 22"><path d="M9 3h4v6h6v4h-6v6h-4v-6h-6v-4h6z" fill="#fff"/></svg>
</div>
<div class="lbl" style="top:872px;line-height:22px">Reference line</div>
<div class="fld dd" style="top:871px;left:854px;width:397px;height:22px;line-height:22px">Member x-axis</div>
<div class="arr" style="left:1238.5px;top:879px"></div>
<div class="lbl" style="top:896px;line-height:22px">Rows [mm]</div>
<div class="fld tx" style="top:895px;left:853px;width:398px;height:22px;line-height:22px;padding-left:5px">20.0 -40.0</div>
<div class="lbl" style="top:920px;line-height:22px">Positions [mm]</div>
<div class="fld tx" style="top:919px;left:853px;width:398px;height:22px;line-height:22px;padding-left:5px">40.0</div>
<div class="lbl" style="top:944px;line-height:22px">Grid</div>
<div class="fld dd" style="top:943px;left:854px;width:397px;height:22px;line-height:22px">Regular</div>
<div class="arr" style="left:1238.5px;top:951px"></div>
<div class="lbl" style="top:968px;line-height:22px">Shear plane in thread</div>
<div class="a" style="left:859px;top:972px;width:11px;height:11px;background:#e6e6e6;border-radius:1px"></div><svg class="a" style="left:857px;top:967px" width="18" height="18" viewBox="857 967 18 18"><path d="M861.6 977.4 L865 981.2 L872.4 971.6" stroke="#f7901e" stroke-width="2.3" fill="none"/></svg>
<div class="lbl" style="top:993px;line-height:20px">Shear force transfer</div>
<div class="fld dd" style="top:991px;left:854px;width:397px;height:20px;line-height:22px">Bearing - tension/shear interaction</div>
<div class="arr" style="left:1238.5px;top:998px"></div>
</body></html>
